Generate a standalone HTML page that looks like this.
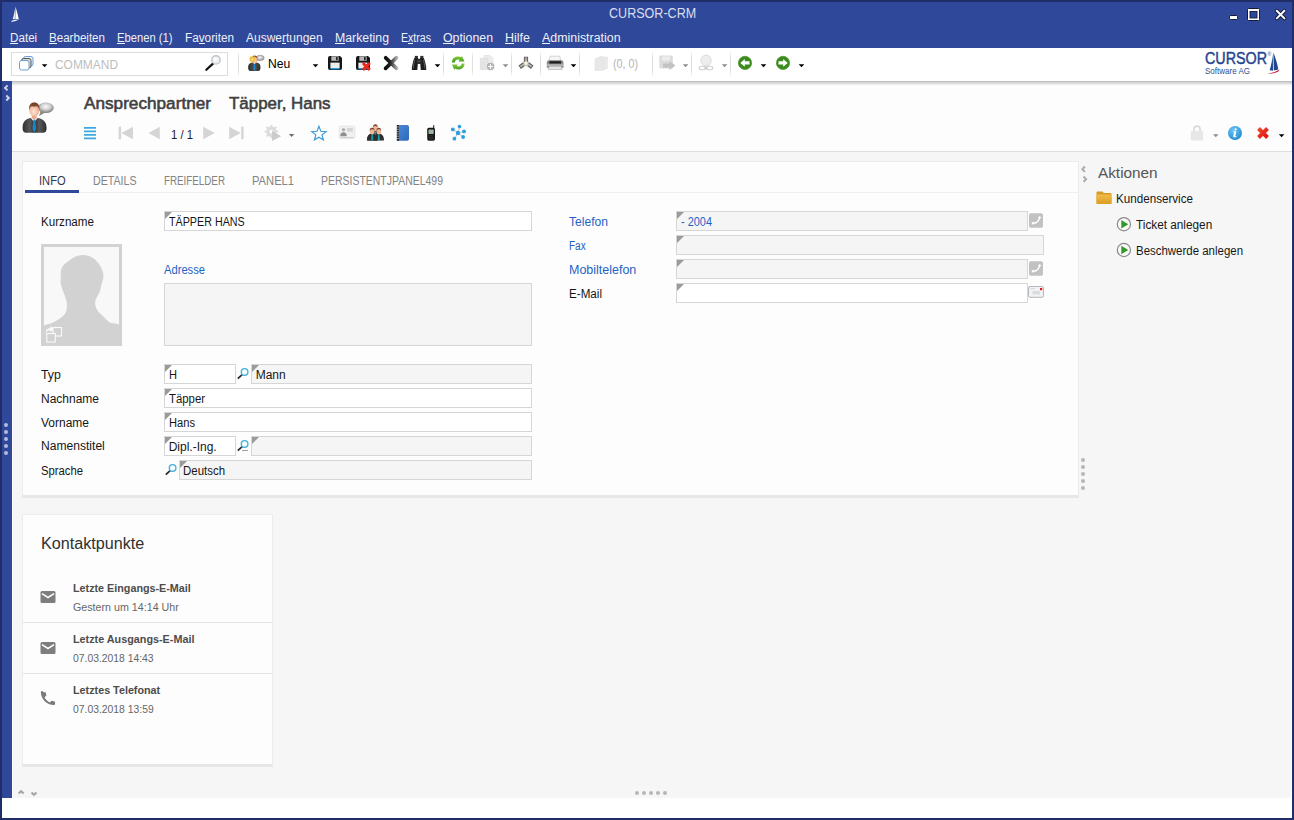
<!DOCTYPE html>
<html lang="de"><head><meta charset="utf-8"><title>CURSOR-CRM</title>
<style>
*{box-sizing:border-box;margin:0;padding:0}
html,body{width:1294px;height:820px;overflow:hidden;background:#fff}
body{position:relative;font-family:"Liberation Sans",sans-serif;font-size:12px}
.a{position:absolute;display:block}
.t{position:absolute;display:block;white-space:pre;line-height:1;transform-origin:0 0;font-family:"Liberation Sans",sans-serif}
.t u{text-decoration:underline;text-underline-offset:1px}
.f{position:absolute;height:20px;border:1px solid #d6d6d6;background:#fff}
.f.g{background:#f5f5f5}
.f:before{content:"";position:absolute;left:0;top:0;border-style:solid;border-width:7px 7px 0 0;border-color:#9a9a9a transparent transparent transparent}
.f.n:before{display:none}
.sep{position:absolute;top:51px;width:1px;height:26px;background:linear-gradient(#fff,#dfdfdf 22%,#dfdfdf 78%,#fff)}
svg{position:absolute;overflow:visible}

</style></head>
<body>
<!-- window frame -->
<div class="a" style="left:0;top:0;width:1294px;height:820px;background:#1f2d68"></div>
<div class="a" style="left:2px;top:2px;width:1290px;height:816px;background:#fff"></div>
<div class="a" style="left:2px;top:2px;width:1290px;height:46px;background:#2f4899"></div>
<!-- toolbar shadow + header -->
<div class="a" style="left:12px;top:81px;width:1280px;height:70px;background:#fdfdfd"></div>
<div class="a" style="left:12px;top:81px;width:1280px;height:5px;background:linear-gradient(#bcbcbc,#d2d2d2 30%,#e8e8e8 60%,#f7f7f7 85%,#fdfdfd)"></div>
<div class="a" style="left:12px;top:151px;width:1280px;height:1px;background:#dedede"></div>
<!-- gray work area -->
<div class="a" style="left:13px;top:152px;width:1278px;height:646px;background:#f6f6f6"></div>
<!-- left strip -->
<div class="a" style="left:2px;top:81px;width:10px;height:717px;background:#2f4899"></div>
<!-- info panel -->
<div class="a" style="left:22px;top:161px;width:1057px;height:337px;background:#fdfdfd;border:1px solid #ececec;border-bottom:3px solid #e7e7e7"></div>
<div class="a" style="left:25px;top:192px;width:1053px;height:1px;background:#efefef"></div>
<div class="a" style="left:25px;top:190px;width:54px;height:3px;background:#2f4899"></div>
<!-- kontaktpunkte card -->
<div class="a" style="left:22px;top:514px;width:251px;height:253px;background:#fdfdfd;border:1px solid #ececec;border-bottom:3px solid #e7e7e7"></div>
<div class="a" style="left:23px;top:622px;width:249px;height:1px;background:#e6e6e6"></div>
<div class="a" style="left:23px;top:673px;width:249px;height:1px;background:#e6e6e6"></div>
<!-- fields -->
<div class="f" style="left:164px;top:211px;width:368px"></div>
<div class="f g n" style="left:164px;top:283px;width:368px;height:63px"></div>
<div class="f" style="left:164px;top:364px;width:72px"></div>
<div class="f g" style="left:251px;top:364px;width:281px"></div>
<div class="f" style="left:164px;top:388px;width:368px"></div>
<div class="f" style="left:164px;top:412px;width:368px"></div>
<div class="f" style="left:164px;top:436px;width:72px"></div>
<div class="f g" style="left:251px;top:436px;width:281px"></div>
<div class="f g" style="left:179px;top:460px;width:353px"></div>
<div class="f g" style="left:676px;top:211px;width:352px"></div>
<div class="f g" style="left:676px;top:235px;width:368px"></div>
<div class="f g" style="left:676px;top:259px;width:352px"></div>
<div class="f" style="left:676px;top:283px;width:352px"></div>
<!-- command box + separators -->
<div class="a" style="left:11px;top:52px;width:217px;height:24px;border:1px solid #dcdcdc;background:#fff"></div>
<div class="sep" style="left:238px"></div><div class="sep" style="left:443px"></div><div class="sep" style="left:472px"></div><div class="sep" style="left:511px"></div><div class="sep" style="left:540px"></div><div class="sep" style="left:579px"></div><div class="sep" style="left:652px"></div><div class="sep" style="left:691px"></div><div class="sep" style="left:730px"></div>
<!-- menu mnemonic underlines -->
<div class="a" style="left:9.9px;top:43px;width:8.4px;height:1px;background:#eef0f8"></div><div class="a" style="left:49.3px;top:43px;width:7.7px;height:1px;background:#eef0f8"></div><div class="a" style="left:117.3px;top:43px;width:7.5px;height:1px;background:#eef0f8"></div><div class="a" style="left:199.0px;top:43px;width:5.9px;height:1px;background:#eef0f8"></div><div class="a" style="left:282.0px;top:43px;width:4.0px;height:1px;background:#eef0f8"></div><div class="a" style="left:335.3px;top:43px;width:10.2px;height:1px;background:#eef0f8"></div><div class="a" style="left:408.3px;top:43px;width:5.2px;height:1px;background:#eef0f8"></div><div class="a" style="left:443.0px;top:43px;width:9.6px;height:1px;background:#eef0f8"></div><div class="a" style="left:505.2px;top:43px;width:9.0px;height:1px;background:#eef0f8"></div><div class="a" style="left:542.0px;top:43px;width:8.3px;height:1px;background:#eef0f8"></div>
<!-- title bar icons -->
<svg style="left:0;top:0" width="1294" height="48" viewBox="0 0 1294 48">
 <path d="M15.5 6.6C16.6 10.5 18 15 18.7 19.1L15.3 19.4Z" fill="#fff"/>
 <path d="M15.1 8.2C14.6 12 13.6 16 12.7 19L14.9 19.3Z" fill="#fff" opacity=".92"/>
 <path d="M11 21.9Q15.5 21.6 19.9 18.9Q16 20.1 12.6 20.2Z" fill="#fff"/>
 <rect x="1229.5" y="15.5" width="8" height="4" rx="1" fill="#fff" stroke="#141a3a"/>
 <rect x="1247.5" y="8.5" width="12" height="12" rx="1" fill="#fff" stroke="#141a3a"/>
 <rect x="1250" y="11.5" width="7" height="6.5" fill="#2f4899" stroke="#141a3a" stroke-width=".9"/>
 <path d="M1276.8 10.8L1284.4 18.4M1284.4 10.8L1276.8 18.4" stroke="#141a3a" stroke-width="3.8" stroke-linecap="round"/>
 <path d="M1276.8 10.8L1284.4 18.4M1284.4 10.8L1276.8 18.4" stroke="#fff" stroke-width="2" stroke-linecap="round"/>
</svg>
<!-- toolbar icons -->
<svg style="left:0;top:48px" width="1294" height="34" viewBox="0 48 1294 34">
 <defs>
  <linearGradient id="gk" x1="0" y1="0" x2="1" y2="1"><stop offset="0" stop-color="#111"/><stop offset="1" stop-color="#555"/></linearGradient>
  <linearGradient id="gx" gradientUnits="userSpaceOnUse" x1="384" y1="0" x2="398" y2="0"><stop offset="0" stop-color="#0a0a0a"/><stop offset=".45" stop-color="#222"/><stop offset=".7" stop-color="#6e6e6e"/><stop offset="1" stop-color="#c4c4c4"/></linearGradient>
  <radialGradient id="lens" cx=".4" cy=".4" r=".7"><stop offset="0" stop-color="#fff"/><stop offset="1" stop-color="#dfe6ee"/></radialGradient>
  <linearGradient id="gr" x1="0" y1="0" x2="0" y2="1"><stop offset="0" stop-color="#8ccf3a"/><stop offset="1" stop-color="#3f9a22"/></linearGradient>
  <linearGradient id="suit" x1="0" y1="0" x2="1" y2="0"><stop offset="0" stop-color="#2c2c2c"/><stop offset=".5" stop-color="#555"/><stop offset="1" stop-color="#2c2c2c"/></linearGradient>
  <radialGradient id="bub" cx=".45" cy=".4" r=".7"><stop offset="0" stop-color="#f6f6f6"/><stop offset="1" stop-color="#8c8c8c"/></radialGradient>
  <radialGradient id="glow"><stop offset="0" stop-color="#fff0a8"/><stop offset=".6" stop-color="#f0bc30"/><stop offset="1" stop-color="#e6a418" stop-opacity=".35"/></radialGradient>
  <radialGradient id="skin" cx=".45" cy=".55" r=".6"><stop offset="0" stop-color="#ffe0d0"/><stop offset="1" stop-color="#e8a888"/></radialGradient>
 </defs>
 <!-- stack -->
 <rect x="23.5" y="56.5" width="9.5" height="9.5" rx="2" fill="#eaf1f8" stroke="#6f9fd0"/>
 <rect x="21.5" y="58.5" width="9.5" height="9.5" rx="2" fill="#d8d8d8" stroke="#555"/>
 <rect x="19.5" y="60.5" width="9.5" height="9.5" rx="2" fill="#fff" stroke="#6f9fd0"/>
 <path d="M41.8 64.2h5.6l-2.8 3z" fill="#000"/>
 <!-- magnifier -->
 <path d="M206.3 69.8L213 63.6" stroke="#111" stroke-width="2.2" stroke-linecap="round"/>
 <circle cx="216" cy="59.9" r="4.2" fill="url(#lens)" stroke="#c4c4c4" stroke-width="1.4"/>
 <!-- Neu person -->
 <path d="M257.200 59.300l-1.300 2.300 2.800-1.600z" fill="#8a8a8a"/>
 <ellipse cx="260.200" cy="57.900" rx="4" ry="2.600" fill="url(#bub)" stroke="#8c8c8c" stroke-width=".6"/>
 <path d="M248.100 67.400c0-3 1.400-4.500 4.300-5h4c2.900.5 4.100 2 4.100 5 0 2-.8 3.300-2 3.500h-8.400c-1.200-.2-2-1.500-2-3.500z" fill="url(#suit)"/>
 <path d="M253.200 62.700l1.300 1.400 1.300-1.400z" fill="#fff"/>
 <path d="M254.100 64h.9l.5 5-1 1.800-1-1.800z" fill="#1a8ad0"/>
 <ellipse cx="254.500" cy="59.900" rx="2.800" ry="3.400" fill="url(#skin)"/>
 <path d="M251.700 58.800c0-2.400 1.300-3.400 2.900-3.400s2.900 1 2.900 3.400c-.8-1.200-1.800-1.700-2.900-1.700s-2.100.5-2.900 1.700z" fill="#8a4a30"/>
 <path d="M252.300 55.300l.8 1.500 1.600-.7-.5 1.700 1.600.8-1.600.8.500 1.700-1.600-.7-.8 1.500-.8-1.500-1.600.7.500-1.700-1.600-.8 1.600-.8-.5-1.700 1.600.7z" fill="#f0cc60" opacity=".85"/>
 <circle cx="252.300" cy="59.500" r="2.900" fill="url(#glow)"/>
 <path d="M312.700 64.200h5.600l-2.800 3z" fill="#000"/>
 <!-- save -->
 <g>
 <path d="M328 58a2 2 0 0 1 2-2h10l2 2v10a2 2 0 0 1-2 2h-10a2 2 0 0 1-2-2z" fill="#161616"/>
 <rect x="331.300" y="56.300" width="7.400" height="4.500" fill="#b8b8b8"/>
 <rect x="336" y="57" width="1.700" height="3.200" fill="#2a2a2a"/>
 <rect x="330.400" y="62.600" width="9.200" height="5.600" fill="#ececec"/>
 <rect x="330.400" y="68" width="9.200" height="1.400" fill="#2a9be0"/>
 </g>
 <g transform="translate(28 0)">
 <path d="M328 58a2 2 0 0 1 2-2h10l2 2v10a2 2 0 0 1-2 2h-10a2 2 0 0 1-2-2z" fill="#161616"/>
 <rect x="331.300" y="56.300" width="7.400" height="4.500" fill="#b8b8b8"/>
 <rect x="336" y="57" width="1.700" height="3.200" fill="#2a2a2a"/>
 <rect x="330.400" y="62.600" width="9.200" height="5.600" fill="#ececec"/>
 <rect x="330.400" y="68" width="9.200" height="1.400" fill="#2a9be0"/>
 </g>
 <path d="M362.900 63l6.900 6.900M369.800 63l-6.900 6.900" stroke="#e8281c" stroke-width="2.900"/>
 <!-- delete X -->
 <path d="M385.700 57.800L396.600 68.300" stroke="url(#gx)" stroke-width="3.700" stroke-linecap="round"/>
 <path d="M396.600 57.600L385.600 68.400" stroke="url(#gx)" stroke-width="3.700" stroke-linecap="round"/>
 <!-- binoculars -->
 <rect x="414.800" y="55.900" width="3.100" height="2.400" fill="#2e2e2e"/><rect x="420.300" y="55.900" width="3.100" height="2.400" fill="#2e2e2e"/>
 <path d="M414.300 57.900h4l-1 12h-5.400v-3l1.300-6z" fill="#1c1c1c"/>
 <path d="M423.800 57.900h-4l1 12h5.400v-3l-1.300-6z" fill="#1c1c1c"/>
 <rect x="416.500" y="59" width="5.200" height="4.900" fill="#262626"/>
 <path d="M414.600 59.500l-1.500 9M423.500 59.500l1.500 9" stroke="#5a5a5a" stroke-width="1"/>
 <path d="M417 61.200h4.200" stroke="#6a6a6a" stroke-width=".8"/>
 <path d="M434.700 64.200h5.600l-2.800 3z" fill="#000"/>
 <!-- refresh -->
 <path d="M451.900 62.400C451.900 58.600 454.600 56.400 458 56.400C459.300 56.400 460.400 56.700 461.300 57.300L461.900 55.800L464.500 61.400L458.600 61.400L459.600 59.800C459.100 59.500 458.600 59.400 458 59.400C456.200 59.400 455 60.500 454.900 62.400Z" fill="url(#gr)"/>
 <path d="M464.500 63.500C464.500 67.300 461.800 69.500 458.400 69.500C457.100 69.500 456 69.200 455.100 68.600L454.500 70.100L451.900 64.500L457.800 64.500L456.800 66.100C457.300 66.400 457.800 66.500 458.400 66.500C460.200 66.500 461.400 65.400 461.500 63.500Z" fill="url(#gr)"/>
 <!-- doc plus (disabled) -->
 <path d="M484 55.500h6l3 3v9h-9z" fill="#ececec" stroke="#dcdcdc" stroke-width=".6"/>
 <path d="M480.300 58.300h7.500v11.200h-7.500z" fill="#e4e4e4" stroke="#d8d8d8" stroke-width=".6"/>
 <circle cx="490.500" cy="66.400" r="4.100" fill="#b4b4b4" stroke="#fdfdfd" stroke-width=".6"/>
 <path d="M488.100 66.500h4.800M490.500 64.100v4.800" stroke="#fff" stroke-width="1.050"/>
 <path d="M502.700 64.200h5.600l-2.800 3z" fill="#8c8c8c"/>
 <!-- network Y -->
 <path d="M526 56.800v6M526 62.600l-6.300 4.600M526 62.600l6.300 4.600" stroke="#666" stroke-width="4.200" stroke-linecap="butt"/>
 <path d="M526 57.500v5.100l-5.600 4.100M526 62.600l5.600 4.100" stroke="#b9b9b9" stroke-width="1.500" fill="none"/>
 <path d="M526 59.800l1 2.200 2.400.2-1.800 1.600.5 2.400-2.100-1.200-2.100 1.200.5-2.400-1.800-1.600 2.400-.2z" fill="#f6f2e6" stroke="#c0b090" stroke-width=".5"/>
 <!-- printer -->
 <path d="M550.300 56.200h9.400l1.300 4.300h-12z" fill="#f6f6f6" stroke="#b8b8b8" stroke-width=".6"/>
 <path d="M546.800 62.400a2.200 2.200 0 0 1 2.200-2.200h12.300a2.200 2.200 0 0 1 2.200 2.200v5.400h-16.700z" fill="#8a8a8a"/>
 <rect x="549.300" y="61.300" width="11.800" height="2.200" rx=".5" fill="#1c1c1c"/>
 <rect x="546.800" y="64.500" width="16.700" height="1.300" fill="#c8c8c8"/>
 <path d="M549.200 66.200h12l.9 3.300h-13.800z" fill="#e6e6e6" stroke="#9c9c9c" stroke-width=".5"/>
 <path d="M570.700 64.200h5.600l-2.800 3z" fill="#000"/>
 <!-- copy (disabled) -->
 <path d="M599.500 57l2-1.200 2 1.200h4v11.500h-8z" fill="#ececec" stroke="#e0e0e0" stroke-width=".5"/>
 <path d="M597.300 58l2-1.200 2 1.200h4v11.500h-8z" fill="#eaeaea" stroke="#dedede" stroke-width=".5"/>
 <path d="M595 59l2-1.200 2 1.200h4v11.500h-8z" fill="#e8e8e8" stroke="#dcdcdc" stroke-width=".5"/>
 <!-- export (disabled) -->
 <rect x="659.300" y="55.500" width="13.500" height="13" rx="1" fill="#dcdcdc"/>
 <rect x="662" y="56.500" width="8" height="4" fill="#ececec"/>
 <path d="M663 63.500h6.500v-2.500l6 4.500-6 4.500v-2.500h-6.500z" fill="#c2c2c2"/>
 <path d="M682.800 64.200h5.600l-2.800 3z" fill="#8c8c8c"/>
 <!-- user link (disabled) -->
 <circle cx="706" cy="60.500" r="5.300" fill="#ededed" stroke="#d6d6d6" stroke-width=".8"/>
 <ellipse cx="702.500" cy="68" rx="3.300" ry="1.800" fill="none" stroke="#d0d0d0" stroke-width="1.100"/>
 <ellipse cx="709.500" cy="68" rx="3.300" ry="1.800" fill="none" stroke="#d0d0d0" stroke-width="1.100"/>
 <path d="M704 68h4" stroke="#c8c8c8" stroke-width="1.200"/>
 <path d="M721.800 64.200h5.600l-2.800 3z" fill="#8c8c8c"/>
 <!-- back / forward -->
 <circle cx="745" cy="62.900" r="6.600" fill="#3a8a20" stroke="#4f9a2a" stroke-width=".8"/>
 <path d="M740.300 62.900l4.500-3.900v2.300h4.700v3.200h-4.700v2.300z" fill="#fff"/>
 <path d="M760.700 64.200h5.600l-2.800 3z" fill="#000"/>
 <circle cx="783" cy="62.900" r="6.600" fill="#3a8a20" stroke="#4f9a2a" stroke-width=".8"/>
 <path d="M787.700 62.900l-4.500-3.900v2.300h-4.700v3.200h4.700v2.300z" fill="#fff"/>
 <path d="M798.700 64.200h5.600l-2.800 3z" fill="#000"/>
 <!-- logo sail -->
 <path d="M1273.300 52.300C1275.500 58 1277.500 64 1278.300 69.600L1273.800 70.600Z" fill="#1f4690"/>
 <path d="M1272.800 54.500C1272.300 60 1271 66 1269.600 70.300L1273 70.700Z" fill="#1f4690"/>
 <path d="M1267.300 73.900Q1274 72.800 1279.600 69.400Q1279 71.200 1277.500 71.900Q1272 73.800 1267.300 73.900Z" fill="#d01840"/>
</svg>
<!-- header icons -->
<svg style="left:0;top:82px" width="1294" height="70" viewBox="0 82 1294 70">
 <defs>
  <linearGradient id="suit2" x1="0" y1="0" x2="1" y2="0"><stop offset="0" stop-color="#2e2e2e"/><stop offset=".3" stop-color="#585858"/><stop offset=".5" stop-color="#333"/><stop offset=".7" stop-color="#585858"/><stop offset="1" stop-color="#2e2e2e"/></linearGradient>
  <radialGradient id="bub2" cx=".5" cy=".4" r=".65"><stop offset="0" stop-color="#fafafa"/><stop offset=".45" stop-color="#cfcfcf"/><stop offset="1" stop-color="#6a6a6a"/></radialGradient>
  <radialGradient id="skin2" cx=".45" cy=".6" r=".6"><stop offset="0" stop-color="#ffe6d8"/><stop offset="1" stop-color="#e9a688"/></radialGradient>
  <linearGradient id="hair" x1="0" y1="0" x2="0" y2="1"><stop offset="0" stop-color="#6a3a22"/><stop offset="1" stop-color="#a06a48"/></linearGradient>
  <linearGradient id="book" x1="0" y1="0" x2="1" y2="1"><stop offset="0" stop-color="#4a8ad8"/><stop offset="1" stop-color="#2f68b8"/></linearGradient>
  <radialGradient id="info" cx=".4" cy=".3" r=".8"><stop offset="0" stop-color="#6cc4f4"/><stop offset="1" stop-color="#1a86d0"/></radialGradient>
  <linearGradient id="redx" x1="0" y1="0" x2="1" y2="1"><stop offset="0" stop-color="#f04a28"/><stop offset="1" stop-color="#e01414"/></linearGradient>
 </defs>
 <!-- strip chevrons -->
 <path d="M7.600 85.400l-2.500 2.500 2.500 2.500M6.300 95.500l2.500 2.500-2.500 2.500" fill="none" stroke="#cfd4e6" stroke-width="2"/>
 <!-- big person -->
 <path d="M39 116l1.500-4.500 4 1.500z" fill="#8a8a8a"/>
 <ellipse cx="45.800" cy="107.700" rx="8" ry="5.200" fill="url(#bub2)"/>
 <path d="M22.600 128.200c0-6 2-9 8-10.300h7.400c6 1.300 8.600 4.300 8.600 10.300 0 2.600-1 4.300-3 4.600h-18c-2-.300-3-2-3-4.600z" fill="url(#suit2)"/>
 <path d="M30.800 118l3.400 4 3.400-4-1.500-1.200h-3.800z" fill="#fafafa"/>
 <path d="M33.400 119.400h1.800l.9 9.600-1.800 3.600-1.800-3.600z" fill="#1487cf"/>
 <path d="M31.700 112h5v6l-2.500 1.600-2.500-1.600z" fill="#e8a888"/>
 <ellipse cx="34.300" cy="110.400" rx="4.900" ry="6.200" fill="url(#skin2)"/>
 <path d="M29.200 110.500c-.8-5.500 1.800-7.900 5.100-7.900s5.900 2.400 5.100 7.900c-.6-2.700-1.400-3.800-2.600-4.300-1.700.6-3.400.6-5 0-1.200.5-2 1.600-2.600 4.300z" fill="url(#hair)"/>
 <!-- hamburger -->
 <path d="M84 127.900h12M84 131.400h12M84 134.900h12M84 138.400h12" stroke="#3ba9dd" stroke-width="1.700"/>
 <!-- nav -->
 <g fill="#d5d5d5">
 <rect x="118.700" y="126.700" width="2.400" height="12.600"/><path d="M133 126.700v12.600l-11.500-6.300z"/>
 <path d="M159.800 126.700v12.600l-11.400-6.300z"/>
 <path d="M203.200 126.700v12.600l11.500-6.300z"/>
 <path d="M229.200 126.700v12.600l11.600-6.300z"/><rect x="241.200" y="126.700" width="2.400" height="12.600"/>
 </g>
 <!-- gear -->
 <path d="M276.3 130.4L278.1 130.6L278.1 132.6L276.3 132.8L275.7 134.2L276.8 135.7L275.5 137.0L274.0 135.9L272.6 136.5L272.4 138.3L270.4 138.3L270.2 136.5L268.8 135.9L267.3 137.0L266.0 135.7L267.1 134.2L266.5 132.8L264.7 132.6L264.7 130.6L266.5 130.4L267.1 129.0L266.0 127.5L267.3 126.2L268.8 127.3L270.2 126.7L270.4 124.9L272.4 124.9L272.6 126.7L274.0 127.3L275.5 126.2L276.8 127.5L275.7 129.0Z" fill="#dcdcdc"/>
 <circle cx="271.400" cy="131.600" r="1.900" fill="#fdfdfd"/>
 <path d="M272 130.800l9.200 5.500-9.200 4.700z" fill="#cbcbcb"/>
 <path d="M288.800 134h5.600l-2.800 3z" fill="#6e6e6e"/>
 <!-- star -->
 <path d="M318.9 126.3L320.8 131.2L326.1 131.6L322.0 134.9L323.4 140.0L318.9 137.2L314.4 140.0L315.8 134.9L311.7 131.6L317.0 131.2Z" fill="none" stroke="#3a98d8" stroke-width="1.150" stroke-linejoin="miter"/>
 <!-- card -->
 <rect x="339.200" y="126.200" width="15.600" height="12.400" rx="1" fill="#f1f1f1" stroke="#dedede" stroke-width=".7"/>
 <rect x="346.800" y="128" width="6" height="3.600" fill="#d4d4d4"/>
 <circle cx="343.500" cy="129.800" r="1.700" fill="#b0b0b0"/>
 <path d="M340.200 136.300c0-2.800 1.300-4 3.300-4s3.300 1.200 3.300 4z" fill="#8e8e8e"/>
 <rect x="340.500" y="137" width="13" height=".9" fill="#d0d0d0"/>
 <!-- people -->
 <g><path d="M367 140.600c0-4 1.200-6 4-6.800h2.400c2.800.8 4 2.800 4 6.800z" fill="#2e2e2e"/><path d="M371.600 134.600h1.200l.5 5-1.100 1-1.100-1z" fill="#18a0a8"/><ellipse cx="372.200" cy="131.600" rx="2.300" ry="2.900" fill="#f0b496"/><path d="M369.800 131c0-2.400 1-3.300 2.400-3.300s2.400.9 2.400 3.300c-.7-1.300-1.400-1.700-2.400-1.700s-1.700.4-2.400 1.700z" fill="#7a4428"/></g>
 <g transform="translate(3.200 -3.400)"><path d="M367 140.600c0-4 1.200-6 4-6.800h2.400c2.800.8 4 2.800 4 6.800z" fill="#2e2e2e"/><path d="M371.600 134.600h1.200l.5 5-1.100 1-1.100-1z" fill="#18a0a8"/><ellipse cx="372.200" cy="131.600" rx="2.300" ry="2.900" fill="#f0b496"/><path d="M369.800 131c0-2.400 1-3.300 2.400-3.300s2.400.9 2.400 3.300c-.7-1.300-1.400-1.700-2.400-1.700s-1.700.4-2.400 1.700z" fill="#7a4428"/></g><g transform="translate(0 0)"><path d="M367 140.600c0-4 1.200-6 4-6.800h2.400c2.800.8 4 2.800 4 6.800z" fill="#2e2e2e"/><path d="M371.600 134.600h1.200l.5 5-1.100 1-1.100-1z" fill="#18a0a8"/><ellipse cx="372.200" cy="131.600" rx="2.300" ry="2.900" fill="#f0b496"/><path d="M369.800 131c0-2.400 1-3.300 2.400-3.300s2.400.9 2.400 3.300c-.7-1.300-1.400-1.700-2.400-1.700s-1.700.4-2.400 1.700z" fill="#7a4428"/></g><g transform="translate(6.600 0)"><path d="M367 140.600c0-4 1.200-6 4-6.800h2.400c2.800.8 4 2.800 4 6.800z" fill="#2e2e2e"/><path d="M371.600 134.600h1.200l.5 5-1.100 1-1.100-1z" fill="#18a0a8"/><ellipse cx="372.200" cy="131.600" rx="2.300" ry="2.900" fill="#f0b496"/><path d="M369.800 131c0-2.400 1-3.300 2.400-3.300s2.400.9 2.400 3.300c-.7-1.300-1.400-1.700-2.400-1.700s-1.700.4-2.400 1.700z" fill="#7a4428"/></g>
 <!-- book -->
 <path d="M398 125h9a2 2 0 0 1 2 2v11.800a2 2 0 0 1-2 2h-9z" fill="url(#book)"/>
 <rect x="396.800" y="125" width="2" height="15.800" fill="#1c1c1c"/>
 <path d="M396.300 127h2.400M396.300 129.300h2.400M396.300 131.600h2.400M396.300 133.900h2.400M396.300 136.200h2.400M396.300 138.500h2.400" stroke="#e8e8e8" stroke-width=".7"/>
 <!-- mobile -->
 <rect x="433.200" y="125.200" width="1" height="4" fill="#111"/>
 <rect x="427.200" y="127.800" width="7.800" height="13" rx="1.700" fill="#161616"/>
 <rect x="428.500" y="129.600" width="5.200" height="4.300" rx=".6" fill="#9eb4a2"/>
 <path d="M428.700 135.800h4.800M428.700 137.400h4.800M428.700 139h4.800" stroke="#3c3c3c" stroke-width=".8"/>
 <!-- network -->
 <path d="M458 133l1.500-6.500M458 133l-5-3.500M458 133l6-1.500M458 133l5 4M458 133l-3.500 5.500" stroke="#b8b8b8" stroke-width=".9"/>
 <g fill="#2a9fe2"><circle cx="458" cy="133" r="2.200"/><circle cx="459.500" cy="126.600" r="1.800"/><circle cx="452.800" cy="129.400" r="1.900"/><circle cx="464" cy="131.400" r="1.900"/><circle cx="463.100" cy="137" r="1.900"/><circle cx="454.400" cy="138.700" r="1.900"/></g>
 <!-- lock -->
 <path d="M1194 131.500v-2.400a3 3 0 0 1 6 0v2.400" fill="none" stroke="#d9d9d9" stroke-width="1.700"/>
 <rect x="1190.800" y="131" width="12.300" height="9.400" rx="1.200" fill="#e7e7e7"/>
 <path d="M1213 134.200h5.600l-2.800 3z" fill="#8c8c8c"/>
 <!-- info -->
 <circle cx="1235" cy="133" r="7" fill="url(#info)"/>
 <path d="M1235.700 128.200a1.100 1.100 0 1 1-.1 0zM1233.300 131.300h3l-1 5h1.300l-.2 1h-3.300l1-5h-1z" fill="#fff"/>
 <!-- red X -->
 <path d="M1258.500 128.500L1267.500 137.500M1267.500 128.500L1258.500 137.500" stroke="url(#redx)" stroke-width="4"/>
 <path d="M1278.800 134.200h5.600l-2.800 3z" fill="#000"/>
</svg>
<!-- form icons -->
<svg style="left:0;top:152px" width="1294" height="646" viewBox="0 152 1294 646">
 <defs><linearGradient id="fold" x1="0" y1="0" x2="0" y2="1"><stop offset="0" stop-color="#f2bd48"/><stop offset="1" stop-color="#dc9c22"/></linearGradient></defs>
 <!-- photo -->
 <rect x="41" y="244" width="81" height="102" fill="#d2d2d2"/>
 <rect x="44" y="247" width="75" height="96" fill="#f8f8f8"/>
 <path d="M82.500 255c8 0 13 3.500 17.500 10.500 3.500 6 3.800 10 3.200 13.500-1 3-2 5.500-2.500 9.500-1 5-4.500 8.500-5.500 13-.5 4.500 1.500 9 5.500 12.500 4.500 4 7.500 8.500 11 9 3 .3 5.500.8 7.300 1.500V343H44v-17.500c2.500-1 5.500-1.300 8-2.500 5.500-2.600 9-5 12-8 2.700-2.500 3.200-7.500 2.800-12.500-.8-6-4.800-12-6-19-.5-2.700.2-5.200 0-7.500-.3-3.500.2-7 1.700-9.500 1.500-2.600 5-4.500 7.500-6.500 3.500-2.700 7.500-5 12.500-5z" fill="#d2d2d2"/>
 <path d="M45.600 333.200c.2-3.300 1.800-5 4.600-5.300v-1.900l3.700 3.100-3.700 3.100v-1.900c-2 .1-3.500 1-4.600 2.900z" fill="#fbfbfb"/>
 <rect x="53" y="327.500" width="8.500" height="8.500" fill="#d2d2d2" stroke="#fafafa" stroke-width="1.100"/>
 <rect x="46.800" y="333.500" width="8.500" height="8.500" fill="#d2d2d2" stroke="#fafafa" stroke-width="1.100"/>
 <!-- small magnifiers -->
 <g><path d="M238.300 378.200l3.900-3.600" stroke="#1c2c38" stroke-width="1.700" stroke-linecap="round"/><circle cx="244.600" cy="371.900" r="3.300" fill="#f4fafd" stroke="#4aafd9" stroke-width="1.400"/></g>
 <g transform="translate(0 72)"><path d="M238.300 378.200l3.900-3.600" stroke="#1c2c38" stroke-width="1.700" stroke-linecap="round"/><circle cx="244.600" cy="371.900" r="3.300" fill="#f4fafd" stroke="#4aafd9" stroke-width="1.400"/></g><path d="M242.500 450.500h1M244.500 450.500h1M246.500 450.500h1" stroke="#444" stroke-width="1"/>
 <g transform="translate(-72 96)"><path d="M238.300 378.200l3.900-3.600" stroke="#1c2c38" stroke-width="1.700" stroke-linecap="round"/><circle cx="244.600" cy="371.900" r="3.300" fill="#f4fafd" stroke="#4aafd9" stroke-width="1.400"/></g>
 <!-- phone buttons -->
 <g><rect x="1029" y="213.300" width="14" height="14.400" rx="1.800" fill="#c2c2c2"/><path d="M1032.700 223.300q5.600.2 6.900-6" fill="none" stroke="#fff" stroke-width="1.500" stroke-linecap="round"/><circle cx="1033" cy="223.300" r="1.200" fill="#fff"/><circle cx="1039.600" cy="217.600" r="1.200" fill="#fff"/></g>
 <g transform="translate(0 48)"><rect x="1029" y="213.300" width="14" height="14.400" rx="1.800" fill="#c2c2c2"/><path d="M1032.700 223.300q5.600.2 6.900-6" fill="none" stroke="#fff" stroke-width="1.500" stroke-linecap="round"/><circle cx="1033" cy="223.300" r="1.200" fill="#fff"/><circle cx="1039.600" cy="217.600" r="1.200" fill="#fff"/></g>
 <!-- mail icon -->
 <rect x="1028.500" y="286.500" width="15" height="10.800" rx="1.500" fill="#eef3f6" stroke="#b4b8bc"/>
 <rect x="1032.500" y="291" width="7.500" height="3.400" fill="#dcdcdc"/>
 <rect x="1040" y="288" width="2.200" height="2.200" fill="#e8141c"/>
 <path d="M1030.500 288.500h4" stroke="#c4c4c4" stroke-width=".6"/>
 <!-- panel collapse chevrons -->
 <path d="M1084.900 166.500l-2.500 2.700 2.500 2.700M1083.600 176.500l2.500 2.700-2.500 2.700" fill="none" stroke="#ababab" stroke-width="2"/>
 <!-- folder -->
 <path d="M1096.500 192.500a1 1 0 0 1 1-1h5l1.200 1.600h6.800a1 1 0 0 1 1 1v9a1 1 0 0 1-1 1h-13a1 1 0 0 1-1-1z" fill="#d39a26"/>
 <path d="M1096.500 194.600h15v8.500a1 1 0 0 1-1 1h-13a1 1 0 0 1-1-1z" fill="url(#fold)"/>
 <!-- play icons -->
 <g><circle cx="1123.900" cy="224.200" r="6.600" fill="#fafafa" stroke="#8a8a8a" stroke-width="1.200"/><path d="M1121.300 219.900l7 4.300-7 4.300z" fill="#2f9a28"/></g>
 <g transform="translate(0 25.800)"><circle cx="1123.900" cy="224.200" r="6.600" fill="#fafafa" stroke="#8a8a8a" stroke-width="1.200"/><path d="M1121.300 219.900l7 4.300-7 4.300z" fill="#2f9a28"/></g>
 <!-- grip dots -->
 <g fill="#b6b6b6"><circle cx="1083" cy="460" r="2"/><circle cx="1083" cy="467" r="2"/><circle cx="1083" cy="474" r="2"/><circle cx="1083" cy="481" r="2"/><circle cx="1083" cy="488" r="2"/>
 <circle cx="637" cy="793" r="2"/><circle cx="644" cy="793" r="2"/><circle cx="651" cy="793" r="2"/><circle cx="658" cy="793" r="2"/><circle cx="665" cy="793" r="2"/></g>
 <g fill="#b4bcdc"><circle cx="6" cy="425" r="2"/><circle cx="6" cy="432" r="2"/><circle cx="6" cy="439" r="2"/><circle cx="6" cy="446" r="2"/><circle cx="6" cy="453" r="2"/></g>
 <path d="M18.600 793.500l2.500-2.300 2.500 2.300M31.500 792.500l2.500 2.300 2.500-2.300" fill="none" stroke="#a6a6a6" stroke-width="2.100"/>
 <!-- card icons -->
 <g><rect x="40.500" y="591" width="15" height="12" rx="1.500" fill="#7e7e7e"/><path d="M42 593.700l6 3.800 6-3.800" fill="none" stroke="#fdfdfd" stroke-width="1.500"/></g>
 <g transform="translate(0 51)"><rect x="40.500" y="591" width="15" height="12" rx="1.500" fill="#7e7e7e"/><path d="M42 593.700l6 3.800 6-3.800" fill="none" stroke="#fdfdfd" stroke-width="1.500"/></g>
 <path d="M43.800 692.200c.5 0 1.300.2 1.800.1l.8 3.100-1.900 1.900c1.200 2.300 3 4.100 5.300 5.300l1.900-1.900 3.100.8c.2.600.3 1.300.3 1.900 0 .8-.4 1.600-1.200 1.600-7.200 0-13-5.800-13-13 0-.7.700-1 1.400-1z" fill="#7a7a7a" transform="translate(0,0)"/>
</svg>

<span class="t" style="left:608.60px;top:6.25px;font-size:14px;color:#d9def0;transform:scaleX(0.8969);">CURSOR-CRM</span>
<span class="t" style="left:9.90px;top:31.84px;font-size:12px;color:#eef0f8;transform:scaleX(0.9709);">Datei</span>
<span class="t" style="left:49.30px;top:31.84px;font-size:12px;color:#eef0f8;transform:scaleX(0.9647);">Bearbeiten</span>
<span class="t" style="left:117.30px;top:31.84px;font-size:12px;color:#eef0f8;transform:scaleX(0.9347);">Ebenen (1)</span>
<span class="t" style="left:185.30px;top:31.84px;font-size:12px;color:#eef0f8;transform:scaleX(0.9794);">Favoriten</span>
<span class="t" style="left:246.00px;top:31.84px;font-size:12px;color:#eef0f8;">Auswertungen</span>
<span class="t" style="left:335.30px;top:31.84px;font-size:12px;color:#eef0f8;transform:scaleX(1.0249);">Marketing</span>
<span class="t" style="left:401.20px;top:31.84px;font-size:12px;color:#eef0f8;transform:scaleX(0.8819);">Extras</span>
<span class="t" style="left:443.00px;top:31.84px;font-size:12px;color:#eef0f8;transform:scaleX(1.0266);">Optionen</span>
<span class="t" style="left:505.20px;top:31.84px;font-size:12px;color:#eef0f8;transform:scaleX(1.0410);">Hilfe</span>
<span class="t" style="left:542.00px;top:31.84px;font-size:12px;color:#eef0f8;transform:scaleX(1.0338);">Administration</span>
<span class="t" style="left:54.50px;top:59.42px;font-size:12.5px;color:#bdbdbd;transform:scaleX(0.9550);">COMMAND</span>
<span class="t" style="left:268.20px;top:58.42px;font-size:12.5px;color:#000;transform:scaleX(0.9678);">Neu</span>
<span class="t" style="left:613.00px;top:57.84px;font-size:12px;color:#b4b4b4;transform:scaleX(0.8924);">(0, 0)</span>
<span class="t" style="left:1205.00px;top:49.90px;font-size:16.3px;color:#1f4690;transform:scaleX(0.8787);-webkit-text-stroke:0.45px #1f4690;">CURSOR</span>
<span class="t" style="left:1267.50px;top:51.77px;font-size:5px;color:#1f4690;">®</span>
<span class="t" style="left:1205.00px;top:67.09px;font-size:8.4px;color:#2a4e96;transform:scaleX(0.9571);">Software AG</span>
<span class="t" style="left:84.00px;top:95.20px;font-size:16.3px;color:#404040;transform:scaleX(1.0550);-webkit-text-stroke:0.55px #404040;">Ansprechpartner</span>
<span class="t" style="left:229.00px;top:95.20px;font-size:16.3px;color:#404040;transform:scaleX(1.0384);-webkit-text-stroke:0.55px #404040;">Täpper, Hans</span>
<span class="t" style="left:170.50px;top:127.90px;font-size:13px;color:#1c1c2c;transform:scaleX(0.8697);">1 / 1</span>
<span class="t" style="left:39.00px;top:175.04px;font-size:12px;color:#30364e;transform:scaleX(0.9277);">INFO</span>
<span class="t" style="left:93.40px;top:175.04px;font-size:12px;color:#838383;transform:scaleX(0.8875);">DETAILS</span>
<span class="t" style="left:164.00px;top:175.04px;font-size:12px;color:#838383;transform:scaleX(0.8167);">FREIFELDER</span>
<span class="t" style="left:252.00px;top:175.04px;font-size:12px;color:#838383;transform:scaleX(0.9304);">PANEL1</span>
<span class="t" style="left:321.00px;top:175.04px;font-size:12px;color:#838383;transform:scaleX(0.8725);">PERSISTENTJPANEL499</span>
<span class="t" style="left:41.00px;top:215.84px;font-size:12px;color:#161616;transform:scaleX(0.9689);">Kurzname</span>
<span class="t" style="left:41.00px;top:368.54px;font-size:12px;color:#161616;transform:scaleX(1.0236);">Typ</span>
<span class="t" style="left:41.00px;top:392.64px;font-size:12px;color:#161616;">Nachname</span>
<span class="t" style="left:41.00px;top:416.84px;font-size:12px;color:#161616;">Vorname</span>
<span class="t" style="left:41.00px;top:440.14px;font-size:12px;color:#161616;transform:scaleX(1.0070);">Namenstitel</span>
<span class="t" style="left:41.00px;top:464.84px;font-size:12px;color:#161616;transform:scaleX(0.9395);">Sprache</span>
<span class="t" style="left:169.30px;top:215.84px;font-size:12px;color:#161616;transform:scaleX(0.8939);">TÄPPER HANS</span>
<span class="t" style="left:168.70px;top:368.54px;font-size:12px;color:#161616;transform:scaleX(0.9225);">H</span>
<span class="t" style="left:255.70px;top:368.54px;font-size:12px;color:#161616;">Mann</span>
<span class="t" style="left:168.70px;top:392.64px;font-size:12px;color:#161616;transform:scaleX(0.9466);">Täpper</span>
<span class="t" style="left:168.70px;top:416.84px;font-size:12px;color:#161616;transform:scaleX(0.9281);">Hans</span>
<span class="t" style="left:168.70px;top:440.84px;font-size:12px;color:#161616;">Dipl.-Ing.</span>
<span class="t" style="left:183.30px;top:464.84px;font-size:12px;color:#161616;transform:scaleX(0.9539);">Deutsch</span>
<span class="t" style="left:164.00px;top:263.64px;font-size:12px;color:#1e63c4;transform:scaleX(0.9312);">Adresse</span>
<span class="t" style="left:568.50px;top:215.54px;font-size:12px;color:#1e63c4;transform:scaleX(1.0077);">Telefon</span>
<span class="t" style="left:568.50px;top:240.04px;font-size:12px;color:#1e63c4;transform:scaleX(0.8343);">Fax</span>
<span class="t" style="left:568.50px;top:263.54px;font-size:12px;color:#1e63c4;transform:scaleX(1.0399);">Mobiltelefon</span>
<span class="t" style="left:568.50px;top:287.64px;font-size:12px;color:#161616;transform:scaleX(0.9701);">E-Mail</span>
<span class="t" style="left:680.60px;top:215.54px;font-size:12px;color:#1e63c4;transform:scaleX(0.9109);">- 2004</span>
<span class="t" style="left:1098.20px;top:164.60px;font-size:15px;color:#555;transform:scaleX(1.0210);">Aktionen</span>
<span class="t" style="left:1116.00px;top:193.14px;font-size:12px;color:#161616;transform:scaleX(0.9699);">Kundenservice</span>
<span class="t" style="left:1136.30px;top:218.84px;font-size:12px;color:#161616;transform:scaleX(0.9818);">Ticket anlegen</span>
<span class="t" style="left:1136.30px;top:244.84px;font-size:12px;color:#161616;transform:scaleX(0.9547);">Beschwerde anlegen</span>
<span class="t" style="left:41.30px;top:535.76px;font-size:16px;color:#303030;transform:scaleX(1.0098);">Kontaktpunkte</span>
<span class="t" style="left:73.20px;top:582.69px;font-size:11px;color:#4c4c4c;font-weight:700;transform:scaleX(0.9784);">Letzte Eingangs-E-Mail</span>
<span class="t" style="left:73.20px;top:601.69px;font-size:11px;color:#666;transform:scaleX(0.9720);">Gestern um 14:14 Uhr</span>
<span class="t" style="left:73.30px;top:633.69px;font-size:11px;color:#4c4c4c;font-weight:700;transform:scaleX(0.9816);">Letzte Ausgangs-E-Mail</span>
<span class="t" style="left:73.30px;top:652.69px;font-size:11px;color:#666;transform:scaleX(0.9411);">07.03.2018 14:43</span>
<span class="t" style="left:73.30px;top:684.89px;font-size:11px;color:#4c4c4c;font-weight:700;transform:scaleX(0.9794);">Letztes Telefonat</span>
<span class="t" style="left:73.30px;top:704.29px;font-size:11px;color:#666;transform:scaleX(0.9423);">07.03.2018 13:59</span>
</body></html>
